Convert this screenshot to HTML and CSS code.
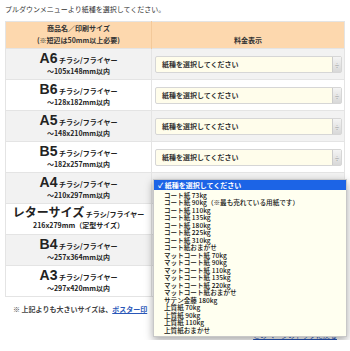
FILE: index.html
```html
<!DOCTYPE html>
<html lang="ja">
<head>
    <meta charset="UTF-8">
    <meta name="viewport" content="width=device-width, initial-scale=1.0">
    <title>料金表示</title>
    <link rel="stylesheet" href="styles.css">
</head>
<body>
    <div class="page">
        <p class="lead">プルダウンメニューより紙種を選択してください。</p>

        <table class="price-table">
            <tr>
                <th class="col-size">商品名／印刷サイズ<br>(※短辺は50mm以上必要)</th>
                <th class="col-price">料金表示</th>
            </tr>
            <tr class="odd">
                <td class="size"><span class="big">A6</span> <span class="kind">チラシ/フライヤー</span><br>～105x148mm以内</td>
                <td class="price"><div class="sel">紙種を選択してください</div></td>
            </tr>
            <tr>
                <td class="size"><span class="big">B6</span> <span class="kind">チラシ/フライヤー</span><br>～128x182mm以内</td>
                <td class="price"><div class="sel">紙種を選択してください</div></td>
            </tr>
            <tr class="odd">
                <td class="size"><span class="big">A5</span> <span class="kind">チラシ/フライヤー</span><br>～148x210mm以内</td>
                <td class="price"><div class="sel">紙種を選択してください</div></td>
            </tr>
            <tr>
                <td class="size"><span class="big">B5</span> <span class="kind">チラシ/フライヤー</span><br>～182x257mm以内</td>
                <td class="price"><div class="sel">紙種を選択してください</div></td>
            </tr>
            <tr class="odd">
                <td class="size"><span class="big">A4</span> <span class="kind">チラシ/フライヤー</span><br>～210x297mm以内</td>
                <td class="price">
                    <div class="sel is-open">
                        <!-- 開いたプルダウン -->
                        <ul class="menu">
                            <li class="active">✓ 紙種を選択してください</li>
                            <li>コート紙 73kg</li>
                            <li>コート紙 90kg（※最も売れている用紙です）</li>
                            <li>コート紙 110kg</li>
                            <li>コート紙 135kg</li>
                            <li>コート紙 180kg</li>
                            <li>コート紙 225kg</li>
                            <li>コート紙 310kg</li>
                            <li>コート紙おまかせ</li>
                            <li>マットコート紙 70kg</li>
                            <li>マットコート紙 90kg</li>
                            <li>マットコート紙 110kg</li>
                            <li>マットコート紙 135kg</li>
                            <li>マットコート紙 220kg</li>
                            <li>マットコート紙おまかせ</li>
                            <li>サテン金藤 180kg</li>
                            <li>上質紙 70kg</li>
                            <li>上質紙 90kg</li>
                            <li>上質紙 110kg</li>
                            <li>上質紙おまかせ</li>
                        </ul>
                    </div>
                </td>
            </tr>
            <tr>
                <td class="size"><span class="big jp">レターサイズ</span> <span class="kind">チラシ/フライヤー</span><br>216x279mm（定型サイズ）</td>
                <td class="price"><div class="sel is-covered"></div></td>
            </tr>
            <tr class="odd">
                <td class="size"><span class="big">B4</span> <span class="kind">チラシ/フライヤー</span><br>～257x364mm以内</td>
                <td class="price"><div class="sel is-covered"></div></td>
            </tr>
            <tr>
                <td class="size"><span class="big">A3</span> <span class="kind">チラシ/フライヤー</span><br>～297x420mm以内</td>
                <td class="price"><div class="sel is-covered"></div></td>
            </tr>
        </table>

        <p class="note">※ 上記よりも大きいサイズは、<a href="#">ポスター印</a></p>
        <p class="totop"><a href="#">このページのトップに戻る</a></p>
    </div>
</body>
</html>
```

FILE: styles.css
```css
body {
    margin: 0;
    padding: 0;
    background-color: #ffffff;
    color: #333333;
    font-family: "Noto Sans CJK JP", "Liberation Sans", sans-serif;
    font-size: 7px;
}
.page {
    padding: 0 5px;
}
.lead {
    margin: 0;
    padding-top: 4px;
    height: 17px;
    line-height: 10px;
}

/* 料金表 */
.price-table {
    width: 100%;
    border-collapse: collapse;
    border: 1px solid #e4e4e4;
}
.price-table th {
    background-color: #fdd8ae;
    font-weight: bold;
    line-height: 11.5px;
    height: 24px;
    padding: 0 0 2px;
    vertical-align: bottom;
}
.col-size {
    width: 145px;
    border-right: 1px solid #f3c99a;
}
.price-table td {
    height: 30px;
    padding: 0;
    border-top: 1px solid #e4e4e4;
}
.price-table tr.odd td {
    background-color: #f2f2f2;
}
.size {
    text-align: center;
    font-weight: bold;
    line-height: 11px;
    border-right: 1px solid #e4e4e4;
    color: #222222;
}
.big {
    font-size: 14px;
    line-height: 13px;
    font-family: "Liberation Sans", "Noto Sans CJK JP", sans-serif;
}
.big.jp {
    font-size: 12px;
}
.kind {
    font-size: 7px;
}
.price {
    padding: 0 2px 0 3px !important;
}

/* セレクト風ボックス */
.sel {
    position: relative;
    height: 15px;
    line-height: 15px;
    padding-left: 6px;
    background-color: #fffdeb;
    border: 1px solid #d6d6d6;
    border-radius: 2px;
    font-weight: bold;
    color: #333333;
}
.sel::after {
    content: "÷";
    position: absolute;
    top: 0;
    right: 0;
    width: 8px;
    height: 15px;
    font-size: 5px;
    text-align: center;
    color: #999999;
    background: linear-gradient(#f4f4f4, #d8d8d8);
    border-left: 1px solid #cccccc;
}

/* 開いたプルダウン */
.menu {
    position: absolute;
    top: -2px;
    left: -3px;
    width: 192px;
    margin: 0;
    padding: 0 0 2px;
    list-style: none;
    background-color: #fffff0;
    border: 1px solid #c8c8c8;
    box-shadow: 0 3px 8px rgba(0, 0, 0, 0.35);
    z-index: 10;
    font-weight: 500;
    color: #111111;
}
.menu li {
    line-height: 7.5px;
    padding-left: 10px;
    white-space: nowrap;
    font-size: 6.6px;
}
.menu li.active {
    line-height: 10px;
    margin-bottom: 2px;
    padding-left: 4px;
    background-color: #1c64e6;
    color: #ffffff;
    font-weight: bold;
    font-size: 7px;
}

.note {
    margin: 0;
    padding: 7px 0 0 8px;
    line-height: 10px;
    font-weight: bold;
    color: #444444;
}
.note a,
.totop a {
    color: #2a57b8;
}
.totop {
    margin: 0;
    padding: 16px 8px 0 0;
    text-align: right;
    line-height: 10px;
}
```
